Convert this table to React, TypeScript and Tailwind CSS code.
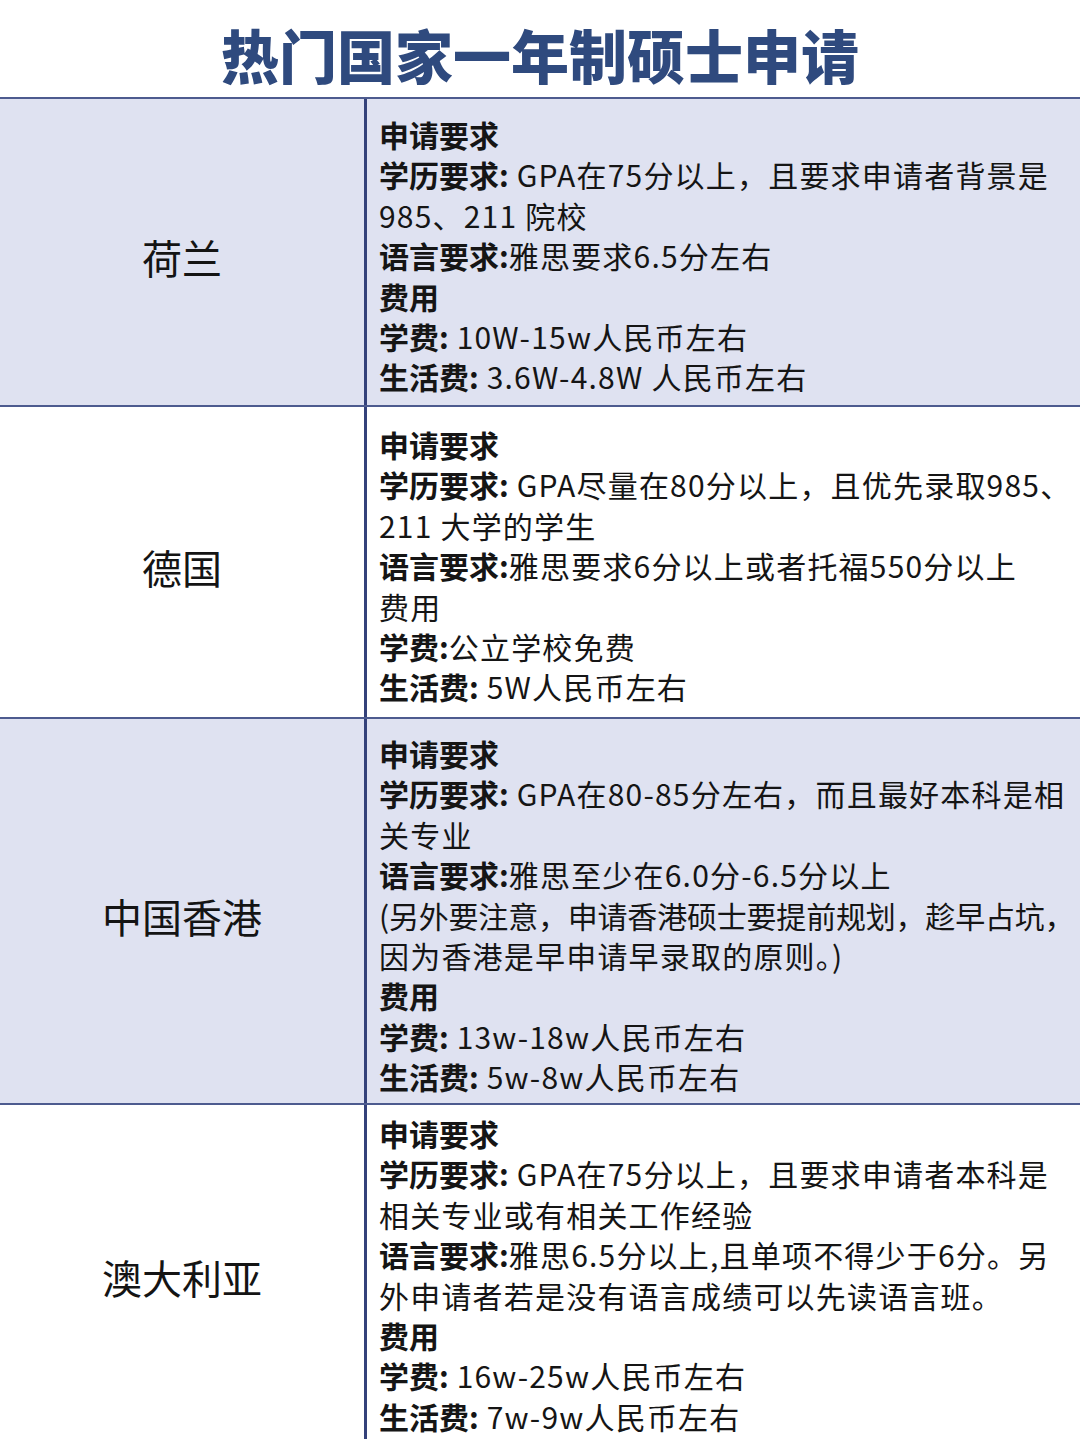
type Seg = { b?: boolean; tight?: boolean; t: string };
type Line = Seg[];

interface Row {
    name: string;
    shaded: boolean;
    height: string;
    pad: string;
    lines: Line[];
}

const rows: Row[] = [
    {
        name: "荷兰",
        shaded: true,
        height: "h-[308px]",
        pad: "pt-[15px]",
        lines: [
            [{ b: true, t: "申请要求" }],
            [{ b: true, t: "学历要求:" }, { t: " GPA在75分以上，且要求申请者背景是" }],
            [{ t: "985、211 院校" }],
            [{ b: true, t: "语言要求:" }, { t: "雅思要求6.5分左右" }],
            [{ b: true, t: "费用" }],
            [{ b: true, t: "学费:" }, { t: " 10W-15w人民币左右" }],
            [{ b: true, t: "生活费:" }, { t: " 3.6W-4.8W 人民币左右" }],
        ],
    },
    {
        name: "德国",
        shaded: false,
        height: "h-[312px]",
        pad: "pt-[17px]",
        lines: [
            [{ b: true, t: "申请要求" }],
            [{ b: true, t: "学历要求:" }, { t: " GPA尽量在80分以上，且优先录取985、" }],
            [{ t: "211 大学的学生" }],
            [{ b: true, t: "语言要求:" }, { t: "雅思要求6分以上或者托福550分以上" }],
            [{ t: "费用" }],
            [{ b: true, t: "学费:" }, { t: "公立学校免费" }],
            [{ b: true, t: "生活费:" }, { t: " 5W人民币左右" }],
        ],
    },
    {
        name: "中国香港",
        shaded: true,
        height: "h-[386px]",
        pad: "pt-[14px]",
        lines: [
            [{ b: true, t: "申请要求" }],
            [{ b: true, t: "学历要求:" }, { t: " GPA在80-85分左右，而且最好本科是相" }],
            [{ t: "关专业" }],
            [{ b: true, t: "语言要求:" }, { t: "雅思至少在6.0分-6.5分以上" }],
            [{ tight: true, t: "(另外要注意，申请香港硕士要提前规划，趁早占坑，" }],
            [{ t: "因为香港是早申请早录取的原则。)" }],
            [{ b: true, t: "费用" }],
            [{ b: true, t: "学费:" }, { t: " 13w-18w人民币左右" }],
            [{ b: true, t: "生活费:" }, { t: " 5w-8w人民币左右" }],
        ],
    },
    {
        name: "澳大利亚",
        shaded: false,
        height: "flex-1",
        pad: "pt-[8px]",
        lines: [
            [{ b: true, t: "申请要求" }],
            [{ b: true, t: "学历要求:" }, { t: " GPA在75分以上，且要求申请者本科是" }],
            [{ t: "相关专业或有相关工作经验" }],
            [{ b: true, t: "语言要求:" }, { t: "雅思6.5分以上,且单项不得少于6分。另" }],
            [{ t: "外申请者若是没有语言成绩可以先读语言班。" }],
            [{ b: true, t: "费用" }],
            [{ b: true, t: "学费:" }, { t: " 16w-25w人民币左右" }],
            [{ b: true, t: "生活费:" }, { t: " 7w-9w人民币左右" }],
        ],
    },
];

function segClass(seg: Seg) {
    if (seg.b) return "font-bold";
    if (seg.tight) return "font-normal tracking-[-0.2px]";
    return "font-normal tracking-[1.2px]";
}

function CountryRow({ row, last }: { row: Row; last: boolean }) {
    return (
        <div
            className={`flex ${row.height} ${last ? "" : "border-b-2 border-[#4d5b8f]"} ${
                row.shaded ? "bg-[#dfe2f1]" : "bg-white"
            }`}
        >
            <div className="w-[367px] shrink-0 border-r-[3px] border-[#34417a] flex items-center justify-center pt-[10px] text-[40px] text-[#141414]">
                {row.name}
            </div>
            <div className={`flex-1 min-w-0 pl-[12px] ${row.pad} text-[30px] leading-[40.4px] text-[#151515]`}>
                {row.lines.map((line, i) => (
                    <div key={i} className="whitespace-nowrap">
                        {line.map((seg, j) => (
                            <span key={j} className={segClass(seg)}>
                                {seg.t}
                            </span>
                        ))}
                    </div>
                ))}
            </div>
        </div>
    );
}

export default function App() {
    return (
        <div className="w-[1080px] h-[1439px] overflow-hidden bg-white flex flex-col font-['Noto_Sans_CJK_SC','Noto_Sans',sans-serif]">
            <h1 className="h-[97px] shrink-0 flex items-center justify-center pt-[12px] text-[58px] font-black text-[#2f4a7e]">
                热门国家一年制硕士申请
            </h1>
            <div className="flex-1 flex flex-col border-t-2 border-[#4d5b8f]">
                {rows.map((row, i) => (
                    <CountryRow key={row.name} row={row} last={i === rows.length - 1} />
                ))}
            </div>
        </div>
    );
}
